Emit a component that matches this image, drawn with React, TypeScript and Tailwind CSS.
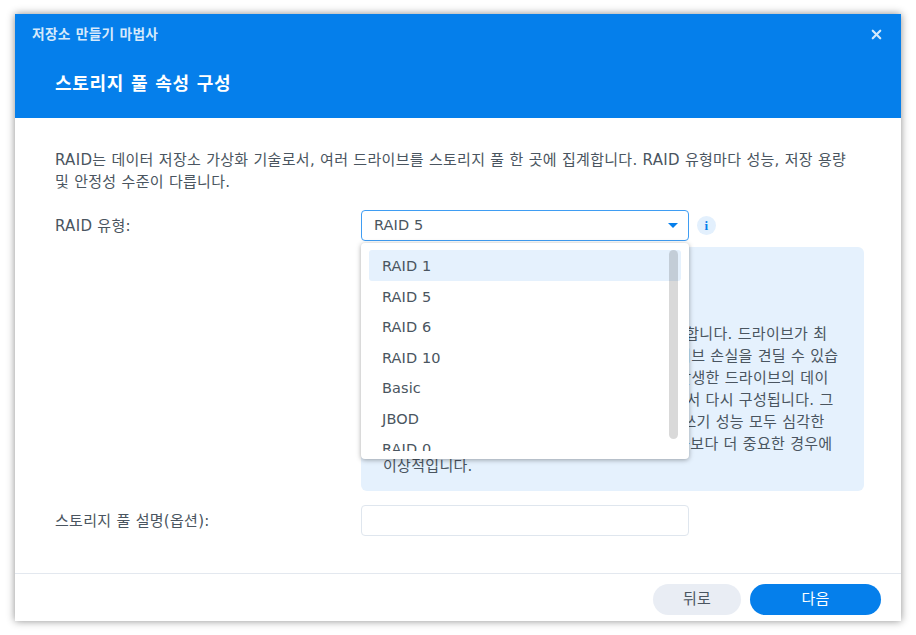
import React from "react";
import { X } from "lucide-react";

const font = { fontFamily: '"DejaVu Sans", "Noto Sans CJK KR", sans-serif' };

const raidOptions = ["RAID 1", "RAID 5", "RAID 6", "RAID 10", "Basic", "JBOD", "RAID 0"];

const infoLines = [
    "RAID 5",
    "",
    "",
    "패리티 데이터를 드라이브들에 분산시켜서 저장합니다. 드라이브가 최",
    "소 3개 이상이 필요하며 어레이당 한개의 드라이브 손실을 견딜 수 있습",
    "니다. 각 스토리지 풀에 오류 발생하면 오류가 발생한 드라이브의 데이",
    "터는 풀에 남아 있는 다른 모든 정상 드라이브에서 다시 구성됩니다. 그",
    "이 과정이 진행되는 동안 각 풀의 전체 읽기 및 쓰기 성능 모두 심각한",
    "저하됩니다. 스토리지의 무결성과 안정성이 성능보다 더 중요한 경우에",
    "이상적입니다.",
];

const App: React.FC = () => {
    return (
        <div className="h-[635px] w-[916px] overflow-hidden bg-white pl-[15px] pt-[14px] text-[15px] tracking-[0.3px] text-[#4a5560]" style={font}>
            <div className="flex h-[607px] w-[886px] flex-col bg-white shadow-[0_0_8px_rgba(0,0,0,0.45)]">
                {/* Header */}
                <div className="relative h-[104px] shrink-0 bg-[#057feb] text-white">
                    <div className="pl-[17px] pt-[10px] text-[13.7px] font-bold leading-[20px] text-[#d5e9fb]">저장소 만들기 마법사</div>
                    <div className="pl-[40px] pt-[26px] text-[18px] font-bold leading-[28px] tracking-[0.7px]">스토리지 풀 속성 구성</div>
                    <X className="absolute right-[17px] top-[13px] h-[15px] w-[15px] text-[#d5e9fb]" strokeWidth={3.5} />
                </div>

                {/* Body */}
                <div className="flex-1 px-[40px] pt-[31px]">
                    <p className="w-[800px] leading-[22px]">
                        RAID는 데이터 저장소 가상화 기술로서, 여러 드라이브를 스토리지 풀 한 곳에 집계합니다. RAID 유형마다 성능, 저장 용량 및 안정성 수준이 다릅니다.
                    </p>

                    <div className="relative mt-[17px] flex items-start">
                        <label className="w-[306px] shrink-0 pt-[5px] leading-[22px]">RAID 유형:</label>
                        <div className="flex flex-col">
                            <div className="flex items-center">
                                <div className="flex h-[31px] w-[328px] items-center justify-between rounded-[4px] border border-[#3f9df3] pl-[12px] pr-[10px] text-[14.5px] tracking-[0.1px]">
                                    <span>RAID 5</span>
                                    <span className="h-0 w-0 border-x-[5px] border-t-[5px] border-x-transparent border-t-[#057feb]" />
                                </div>
                                <div className="ml-[8px] flex h-[19px] w-[19px] items-center justify-center rounded-full bg-[#e3f0fd] text-[13px] font-bold text-[#057feb]" style={{ fontFamily: '"Liberation Serif", serif' }}>i</div>
                            </div>
                            <div className="mt-[6px] h-[244px] w-[503px] rounded-[6px] bg-[#e5f1fd] px-[22px] pt-[10px] leading-[22px]">
                                {infoLines.map((line, i) => (
                                    <div key={i} className="h-[22px] whitespace-nowrap">{line}</div>
                                ))}
                            </div>

                            {/* Dropdown menu */}
                            <div className="absolute left-[306px] top-[33px] h-[216px] w-[328px] overflow-hidden rounded-[4px] bg-white px-[8px] pt-[7px] text-[14.5px] tracking-[0.1px] shadow-[0_1px_5px_rgba(0,0,0,0.35)]">
                                <div className="h-[201px] overflow-hidden">
                                    {raidOptions.map((opt, i) => (
                                        <div key={opt} className={`flex h-[30.6px] items-center rounded-[3px] pl-[13px] pt-[3px] ${i === 0 ? "bg-[#e5f1fd]" : ""}`}>{opt}</div>
                                    ))}
                                </div>
                                <div className="absolute right-[11px] top-[7px] h-[189px] w-[9px] rounded-full bg-black/15" />
                            </div>
                        </div>
                    </div>

                    <div className="mt-[14px] flex items-center">
                        <label className="w-[306px] shrink-0 pt-[1px]">스토리지 풀 설명(옵션):</label>
                        <div className="h-[31px] w-[328px] rounded-[4px] border border-[#dfe6ee] bg-white" />
                    </div>
                </div>

                {/* Footer */}
                <div className="flex h-[48px] shrink-0 items-start justify-end gap-[9px] border-t border-[#e3e8ef] pr-[20px] pt-[10px]">
                    <button className="h-[31px] w-[88px] rounded-full bg-[#e9edf4]">뒤로</button>
                    <button className="h-[31px] w-[131px] rounded-full bg-[#057feb] text-white">다음</button>
                </div>
            </div>
        </div>
    );
};

export default App;
